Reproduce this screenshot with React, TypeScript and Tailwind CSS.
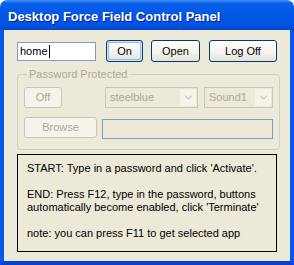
import { ChevronDown } from "lucide-react";

function XpButton({
  label,
  width,
  focused = false,
  disabled = false,
}: {
  label: string;
  width: string;
  focused?: boolean;
  disabled?: boolean;
}) {
  if (disabled) {
    return (
      <div
        className={`${width} flex h-[21px] items-center justify-center rounded-[3px] border border-[#C9C7BA] bg-[#F5F4EA] text-[#ACA899]`}
      >
        {label}
      </div>
    );
  }
  return (
    <div
      className={`${width} flex h-[22px] items-center justify-center rounded-[3px] border border-[#003C74] bg-[linear-gradient(#ffffff,#f3f2ec_60%,#e3e1d6)] text-black ${
        focused ? "shadow-[inset_0_0_0_1px_#cee7ff,inset_0_0_0_2px_#98b8ea]" : ""
      }`}
    >
      {label}
    </div>
  );
}

function DisabledSelect({ value, width }: { value: string; width: string }) {
  return (
    <div
      className={`${width} flex h-[21px] items-center border border-[#C9C7BA] bg-[#ECE9D8] p-[1px]`}
    >
      <span className="flex-1 pl-[3px] text-[#ACA899]">{value}</span>
      <div className="flex h-full w-[16px] items-center justify-center bg-[#F5F4EA]">
        <ChevronDown size={11} strokeWidth={3} className="text-[#C9C7BA]" />
      </div>
    </div>
  );
}

export default function App() {
  return (
    <div className="flex h-[265px] w-[294px] flex-col font-['Liberation_Sans',Arial,sans-serif] text-[11px] leading-[13px]">
      <div className="flex h-[30px] items-center rounded-t-[7px] bg-[linear-gradient(#3d8ff5,#0a5fea_12%,#0058e6_50%,#0054e3_80%,#0148d0)] pl-[8px] pt-[2px]">
        <span className="font-['Liberation_Sans',Arial,sans-serif] text-[13px] font-bold text-white [text-shadow:1px_1px_#0a1e8a]">
          Desktop Force Field Control Panel
        </span>
      </div>

      <div className="flex flex-1 flex-col border-x-4 border-b-4 border-x-[#0757e8] border-b-[#0740d4] bg-[#ECE9D8] px-[13px] pt-[10px]">
        <div className="flex items-center">
          <div className="flex h-[19px] w-[80px] items-center border border-[#7F9DB9] bg-white pl-[2px] text-black">
            home<span className="ml-[1px] h-[13px] w-[1px] bg-black" />
          </div>
          <div className="ml-[10px]">
            <XpButton label="On" width="w-[37px]" focused />
          </div>
          <div className="ml-[8px]">
            <XpButton label="Open" width="w-[49px]" />
          </div>
          <div className="ml-[9px]">
            <XpButton label="Log Off" width="w-[68px]" />
          </div>
        </div>

        <fieldset className="mt-[6px] rounded-[4px] border border-[#D0D0BF] px-[6px] pb-[10px] pt-[6px]">
          <legend className="ml-[3px] px-[2px] text-[#ACA899]">Password Protected</legend>
          <div className="flex items-center">
            <XpButton label="Off" width="w-[38px]" disabled />
            <div className="ml-[43px]">
              <DisabledSelect value="steelblue" width="w-[93px]" />
            </div>
            <div className="ml-[6px]">
              <DisabledSelect value="Sound1" width="w-[69px]" />
            </div>
          </div>
          <div className="mt-[9px] flex items-start">
            <XpButton label="Browse" width="w-[73px]" disabled />
            <div className="ml-[5px] mt-[2px] h-[20px] w-[171px] border border-[#7F9DB9] bg-[#ECE9D8]" />
          </div>
        </fieldset>

        <div className="mt-[4px] border border-black px-[9px] pt-[7px] pb-[11px] text-black">
          <p>START: Type in a password and click 'Activate'.</p>
          <p className="mt-[13px]">END: Press F12, type in the password, buttons</p>
          <p>automatically become enabled, click 'Terminate'</p>
          <p className="mt-[13px]">note: you can press F11 to get selected app</p>
        </div>
      </div>
    </div>
  );
}
